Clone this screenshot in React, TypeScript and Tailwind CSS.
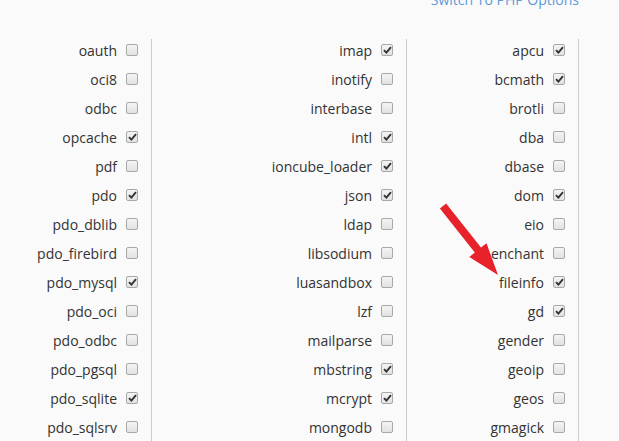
const columns: { width: string; items: [string, boolean][] }[] = [
  {
    width: "w-[152px]",
    items: [
      ["oauth", false],
      ["oci8", false],
      ["odbc", false],
      ["opcache", true],
      ["pdf", false],
      ["pdo", true],
      ["pdo_dblib", false],
      ["pdo_firebird", false],
      ["pdo_mysql", true],
      ["pdo_oci", false],
      ["pdo_odbc", false],
      ["pdo_pgsql", false],
      ["pdo_sqlite", true],
      ["pdo_sqlsrv", false],
    ],
  },
  {
    width: "w-[255px]",
    items: [
      ["imap", true],
      ["inotify", false],
      ["interbase", false],
      ["intl", true],
      ["ioncube_loader", true],
      ["json", true],
      ["ldap", false],
      ["libsodium", false],
      ["luasandbox", false],
      ["lzf", false],
      ["mailparse", false],
      ["mbstring", true],
      ["mcrypt", true],
      ["mongodb", false],
    ],
  },
  {
    width: "w-[172px]",
    items: [
      ["apcu", true],
      ["bcmath", true],
      ["brotli", false],
      ["dba", false],
      ["dbase", false],
      ["dom", true],
      ["eio", false],
      ["enchant", false],
      ["fileinfo", true],
      ["gd", true],
      ["gender", false],
      ["geoip", false],
      ["geos", false],
      ["gmagick", false],
    ],
  },
];

function Checkbox({ checked }: { checked: boolean }) {
  return (
    <span className="flex h-[12px] w-[12px] items-center justify-center rounded-[2px] border border-[#a8a8a8] bg-gradient-to-b from-[#f4f4f4] to-[#e2e2e2]">
      {checked && (
        <svg width="9" height="8" viewBox="0 0 9 8">
          <path d="M1 4.2 L3.4 6.6 L8 1.2" fill="none" stroke="#333" strokeWidth="1.9" />
        </svg>
      )}
    </span>
  );
}

export default function App() {
  return (
    <div className="relative h-[441px] overflow-hidden bg-[#fafafa] font-['Open_Sans',sans-serif] text-[14px] text-[#333]">
      <div className="h-[39px] w-[579px] text-right">
        <a className="relative -top-[10px] block leading-5 text-[#5b9ad8]" href="#">
          Switch To PHP Options
        </a>
      </div>
      <div className="flex">
        {columns.map((col, i) => (
          <div key={i} className={`${col.width} border-r border-[#cccccc] pr-[13px]`}>
            {col.items.map(([name, checked]) => (
              <div key={name} className="mb-[7px] flex h-[22px] items-center justify-end gap-[9px]">
                <span>{name}</span>
                <Checkbox checked={checked} />
              </div>
            ))}
          </div>
        ))}
      </div>
      <svg className="absolute left-0 top-0" width="619" height="441">
        <polygon
          points="446.1,203.5 481,247.6 486.5,243.2 498,275 469.3,257 474.8,252.6 439.9,208.5"
          fill="#e8222a"
        />
      </svg>
    </div>
  );
}
